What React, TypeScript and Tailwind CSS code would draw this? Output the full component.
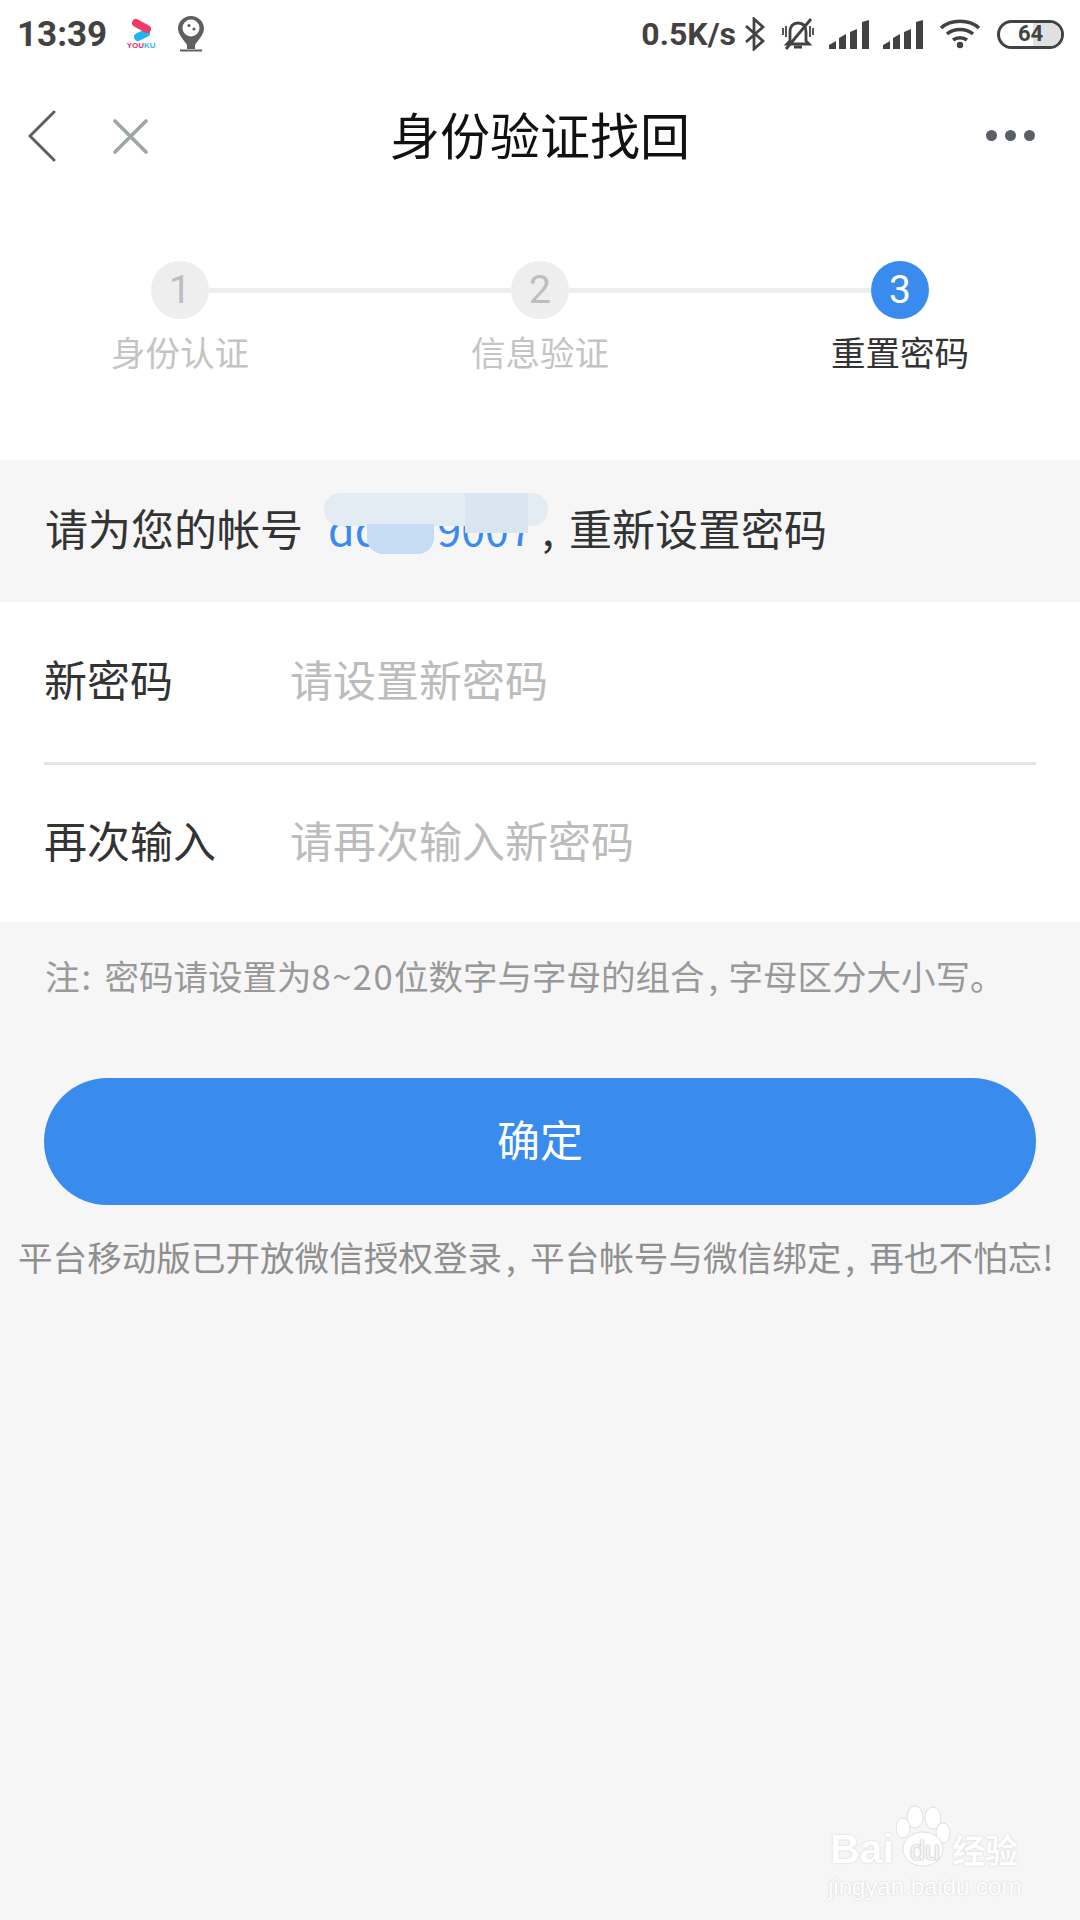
const cjk = "font-['Noto_Sans_CJK_SC','Noto_Sans',sans-serif]";

function StatusBar() {
  return (
    <div className="flex h-[68px] items-center justify-between pl-[17px] pr-[16px] text-[#424242]">
      <div className="flex items-center">
        <span className="font-['Roboto',sans-serif] text-[35px] font-bold leading-none">13:39</span>
        <div className="ml-[20px] flex w-[28px] flex-col items-center">
          <svg width="24" height="24" viewBox="0 0 24 24" fill="none" strokeLinecap="round" strokeWidth="8">
            <path d="M17 15L9 19" stroke="#1fb5f2" />
            <path d="M7 5L18 11" stroke="#f23a68" />
          </svg>
          <span className="font-['Liberation_Sans',sans-serif] text-[8px] font-bold leading-[8px] text-[#d8347c]">
            YOU<span className="text-[#3bb4e6]">KU</span>
          </span>
        </div>
        <svg className="ml-[23px]" width="26" height="36" viewBox="0 0 26 36">
          <path d="M13 0C5.8 0 0 5.6 0 12.6 0 19 6 24 9 29L9 33H17L17 29C20 24 26 19 26 12.6 26 5.6 20.2 0 13 0Z" fill="#5f5f5f" />
          <path d="M2 34.5H24" stroke="#5f5f5f" strokeWidth="2" />
          <circle cx="13" cy="12" r="8.5" fill="#fff" />
          <circle cx="11" cy="9.5" r="1.6" fill="#5f5f5f" />
          <circle cx="16" cy="13" r="1.6" fill="#5f5f5f" />
        </svg>
      </div>
      <div className="flex items-center">
        <span className="font-['Roboto',sans-serif] text-[32px] font-bold leading-none">0.5K/s</span>
        <svg className="ml-[9px]" width="20" height="34" viewBox="0 0 20 34" fill="none" stroke="#424242" strokeWidth="2.8">
          <path d="M1 9 L18 24 L9 32 V2 L18 10 L1 25" />
        </svg>
        <svg className="ml-[16px]" width="34" height="32" viewBox="0 0 34 32" fill="none" stroke="#424242" strokeWidth="2.8">
          <path d="M9 23V14C9 8 12 5 17 5S25 8 25 14V23L28 26H6Z" />
          <path d="M13 29H21" strokeWidth="3" />
          <path d="M5 31L30 1" />
          <path d="M2 10V17M32 10V17M5 8V19M29 8V19" strokeWidth="1.8" />
        </svg>
        <Signal className="ml-[14px]" />
        <Signal className="ml-[14px]" />
        <svg className="ml-[16px]" width="42" height="30" viewBox="0 0 42 30" fill="none" stroke="#424242" strokeWidth="3.6">
          <path d="M2 9C12 0 30 0 40 9" />
          <path d="M8 15C15 9 27 9 34 15" />
          <path d="M14 21C18 18 24 18 28 21" />
          <circle cx="21" cy="26" r="3.2" fill="#424242" stroke="none" />
        </svg>
        <div className="relative ml-[16px] flex h-[29px] w-[67px] items-center justify-center overflow-hidden rounded-full border-[3px] border-[#424242]">
          <div className="absolute inset-y-0 right-0 w-[28px] bg-[#e0e0e0]" />
          <span className="relative font-['Roboto',sans-serif] text-[22px] font-bold leading-none">64</span>
        </div>
      </div>
    </div>
  );
}

function Signal({ className }: { className: string }) {
  return (
    <svg className={className} width="40" height="29" viewBox="0 0 40 29" fill="#424242">
      <path d="M0 29V25L7 21V29Z" />
      <path d="M10 29V18L17 14V29Z" />
      <path d="M21 29V12L28 9V29Z" />
      <path d="M33 29V2L40 0V29Z" />
    </svg>
  );
}

function NavBar() {
  return (
    <div className="flex h-[136px] items-center px-[28px]">
      <div className="flex w-[172px] items-center">
        <svg width="28" height="52" viewBox="0 0 28 52" fill="none" stroke="#5a6064" strokeWidth="3" strokeLinecap="round">
          <path d="M26 2L2 26L26 50" />
        </svg>
        <svg className="ml-[57px]" width="35" height="35" viewBox="0 0 35 35" fill="none" stroke="#9ea5a5" strokeWidth="3.6" strokeLinecap="round">
          <path d="M2 2L33 33M33 2L2 33" />
        </svg>
      </div>
      <span className="flex-1 pb-[7px] text-center text-[50px] leading-none text-[#111]">身份验证找回</span>
      <div className="flex w-[172px] justify-end gap-[8px] pr-[17px] pb-[2px]">
        <span className="size-[11px] rounded-full bg-[#5a6066]" />
        <span className="size-[11px] rounded-full bg-[#5a6066]" />
        <span className="size-[11px] rounded-full bg-[#5a6066]" />
      </div>
    </div>
  );
}

function StepDot({ n, active }: { n: number; active?: boolean }) {
  return (
    <div
      className={
        active
          ? "flex size-[58px] shrink-0 items-center justify-center rounded-full bg-[#3a8bee] font-['Roboto',sans-serif] text-[39px] text-white"
          : "flex size-[58px] shrink-0 items-center justify-center rounded-full bg-[#eeeeee] font-['Roboto',sans-serif] text-[39px] text-[#bdbdbd]"
      }
    >
      {n}
    </div>
  );
}

function Steps() {
  return (
    <div className="h-[256px] bg-white pt-[57px]">
      <div className="flex items-center px-[151px]">
        <StepDot n={1} />
        <div className="h-[5px] flex-1 bg-[#eeeeee]" />
        <StepDot n={2} />
        <div className="h-[5px] flex-1 bg-[#eeeeee]" />
        <StepDot n={3} active />
      </div>
      <div className="mt-[7px] grid grid-cols-3 text-center text-[34.5px] leading-[50px] text-[#c4c4c4]">
        <span>身份认证</span>
        <span>信息验证</span>
        <span className="text-[#333]">重置密码</span>
      </div>
    </div>
  );
}

function Row({ label, hint }: { label: string; hint: string }) {
  return (
    <div className="flex h-full items-center pb-[8px] text-[43px] leading-none">
      <span className="w-[246px] text-[#333]">{label}</span>
      <span className="text-[#bcbcbc]">{hint}</span>
    </div>
  );
}

function Gap({ cls, mark }: { cls: string; mark: string }) {
  return <span className={`inline-block text-left ${cls}`}>{mark}</span>;
}

function AccountLine() {
  return (
    <div className="flex h-[142px] items-center pb-[8px] pl-[45px] text-[43px] leading-none text-[#333]">
      <span>请为您的帐号</span>
      <span className="relative ml-[25px] w-[214px] text-[#3a8bee]">
        dd
        <span className="ml-[56px]">9007</span>
        {/* smudge over the account name */}
        <span className="absolute left-[-4px] top-[-13px] h-[33px] w-[224px] rounded-[16px] bg-[#e3ebf3]" />
        <span className="absolute left-[39px] top-[18px] h-[30px] w-[67px] rounded-b-[16px] bg-[#c6dcf2]" />
        <span className="absolute left-[137px] top-[-13px] h-[40px] w-[63px] bg-[#d9e5f1]" />
      </span>
      <Gap cls="w-[27px]" mark="," />
      <span>重新设置密码</span>
    </div>
  );
}

function Watermark() {
  const glow = "[text-shadow:0_0_2px_#c8c8c8]";
  return (
    <div className="absolute left-[828px] top-[1804px] w-[200px] text-white">
      <svg className="absolute left-[68px] top-0" width="56" height="64" viewBox="0 0 56 64" fill="#fff" stroke="#e0e0e0" strokeWidth="1">
        <ellipse cx="19" cy="13" rx="8" ry="11" />
        <ellipse cx="37" cy="14" rx="8" ry="11" />
        <ellipse cx="7" cy="24" rx="7" ry="10" />
        <ellipse cx="47" cy="29" rx="7" ry="10" />
        <ellipse cx="27" cy="45" rx="20" ry="17" />
      </svg>
      <div className="relative flex items-end pt-[26px] font-['Liberation_Sans',sans-serif] font-bold">
        <span className={`ml-[2px] w-[78px] text-[41px] leading-[38px] ${glow}`}>Bai</span>
        <span className="w-[44px] pl-[2px] text-[27px] font-normal leading-[34px] text-[#f5f5f5] [text-shadow:0_0_2px_#999999]">du</span>
        <span className={`${cjk} text-[33px] leading-[38px] ${glow}`}>经验</span>
      </div>
      <div className={`relative mt-[4px] font-['Liberation_Sans',sans-serif] text-[24px] leading-[30px] whitespace-nowrap ${glow}`}>
        jingyan.baidu.com
      </div>
    </div>
  );
}

export default function App() {
  return (
    <div className={`relative h-[1920px] w-[1080px] overflow-hidden bg-[#f6f6f6] ${cjk}`}>
      <div className="bg-white">
        <StatusBar />
        <NavBar />
      </div>
      <Steps />
      <AccountLine />
      <div className="bg-white px-[44px]">
        <div className="h-[163px] border-b-[3px] border-[#e6e6e6]">
          <Row label="新密码" hint="请设置新密码" />
        </div>
        <div className="h-[157px]">
          <Row label="再次输入" hint="请再次输入新密码" />
        </div>
      </div>
      <p className="pl-[45px] pt-[28px] text-[34.5px] leading-[50px] text-[#999] whitespace-nowrap">
        注<Gap cls="w-[25px] pl-[2px]" mark=":" />密码请设置为<span className="tracking-[1.5px]">8~20</span>位数字与字母的组合<Gap cls="w-[24px] pl-[4px]" mark="," />字母区分大小写。
      </p>
      <div className="mx-[44px] mt-[78px] flex h-[127px] items-center justify-center rounded-full bg-[#3a8bee] pb-[6px] text-[43px] text-white">
        确定
      </div>
      <p className="mt-[26px] pl-[18px] text-[34.6px] leading-[50px] text-[#8f8f8f] whitespace-nowrap">
        平台移动版已开放微信授权登录<Gap cls="w-[28px] pl-[4px]" mark="," />平台帐号与微信绑定<Gap cls="w-[28px] pl-[4px]" mark="," />再也不怕忘!
      </p>
      <Watermark />
    </div>
  );
}
